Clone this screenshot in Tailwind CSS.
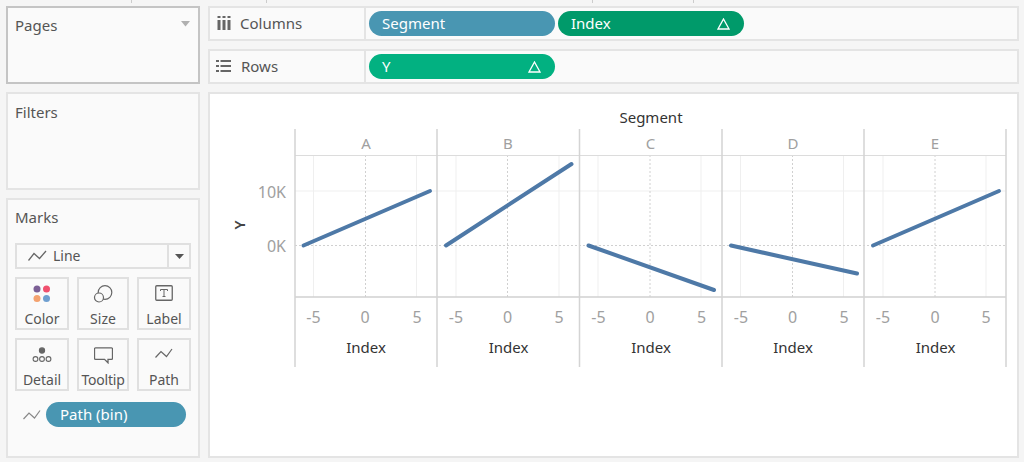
<!DOCTYPE html>
<html lang="en">
<head>
    <meta charset="UTF-8">
    <title>Segment worksheet</title>
    <script src="https://cdn.jsdelivr.net/npm/@tailwindcss/browser@4"></script>
</head>
<body class="bg-[#f5f5f5] font-['Noto_Sans',sans-serif] text-[#555] overflow-hidden">
    <div class="relative w-[1024px] h-[462px] flex gap-[8px] pl-[6px] pr-[5px] pt-[6px] pb-[4px]">
        <!-- top ruler ticks -->
        <div class="absolute left-[131px] top-0 w-px h-[3px] bg-[#ccc]"></div>
        <div class="absolute left-[266px] top-0 w-px h-[3px] bg-[#ccc]"></div>
        <div class="absolute left-[592px] top-0 w-px h-[3px] bg-[#ccc]"></div>
        <div class="absolute left-[693px] top-0 w-px h-[3px] bg-[#ccc]"></div>

        <!-- Left cards -->
        <div class="w-[194px] shrink-0 flex flex-col gap-[8px]">
            <div class="h-[78px] bg-[#fafafa] border-2 border-[#c4c4c4] px-[7px] pt-[7px] flex justify-between items-start">
                <span class="text-[15px] leading-[20px]">Pages</span>
                <svg class="mt-[6px] mr-[1px]" width="9" height="6" viewBox="0 0 9 6"><path d="M0 0h9L4.500 5.500z" fill="#b0b0b0"/></svg>
            </div>
            <div class="h-[98px] bg-[#fafafa] border-2 border-[#e4e4e4] px-[7px] pt-[8px]">
                <span class="text-[15px] leading-[20px] block">Filters</span>
            </div>
            <div class="flex-1 bg-[#fafafa] border-2 border-[#e4e4e4] px-[7px] pt-[7px]">
                <div class="text-[15px] leading-[20px]">Marks</div>
                <div class="mt-[16px] h-[26px] w-[176px] border-2 border-[#e0e0e0] flex items-center">
                    <div class="flex-1 flex items-center pl-[11px] gap-[6px]">
                        <svg width="19" height="12" viewBox="0 0 19 12" fill="none" stroke="#666" stroke-width="1.300"><path d="M0.500 10.500 6 3.500l5.500 5L18 1"/></svg>
                        <span class="text-[14px] leading-[18px]">Line</span>
                    </div>
                    <div class="w-[22px] h-full border-l-2 border-[#e0e0e0] flex items-center justify-center">
                        <svg width="9" height="5" viewBox="0 0 9 5"><path d="M0 0h9L4.500 5z" fill="#555"/></svg>
                    </div>
                </div>
                <div class="mt-[8px] w-[176px] grid grid-cols-[54px_52px_54px] grid-rows-[53px_53px] gap-x-[8px] gap-y-[8px]">
                    <div class="border-2 border-[#e0e0e0] flex flex-col items-center pt-[6px]">
                        <svg width="18" height="18" viewBox="0 0 18 18"><circle cx="4" cy="4" r="3.500" fill="#7b5f95"/><circle cx="13.500" cy="4" r="3.500" fill="#f0506e"/><circle cx="4" cy="13.500" r="3.500" fill="#f4a26f"/><circle cx="13.500" cy="13.500" r="3.500" fill="#6f9fd0"/></svg>
                        <span class="text-[14px] leading-[18px] mt-[7px]">Color</span>
                    </div>
                    <div class="border-2 border-[#e0e0e0] flex flex-col items-center pt-[6px]">
                        <svg width="20" height="18" viewBox="0 0 20 18" fill="none" stroke="#666" stroke-width="1.200"><circle cx="12" cy="7.500" r="6.800"/><circle cx="6" cy="12.500" r="4.500" fill="#fafafa"/></svg>
                        <span class="text-[14px] leading-[18px] mt-[7px]">Size</span>
                    </div>
                    <div class="border-2 border-[#e0e0e0] flex flex-col items-center pt-[6px]">
                        <svg width="18" height="16" viewBox="0 0 18 16" fill="none"><rect x="0.750" y="0.750" width="16.500" height="14.500" rx="1" stroke="#666" stroke-width="1.300"/><path d="M5.500 4.500h7M5.500 4.500v1.500M12.500 4.500v1.500M9 4.500v7M7.500 11.500h3" stroke="#666"/></svg>
                        <span class="text-[14px] leading-[18px] mt-[9px]">Label</span>
                    </div>
                    <div class="border-2 border-[#e0e0e0] flex flex-col items-center pt-[7px]">
                        <svg width="20" height="16" viewBox="0 0 20 16" fill="none" stroke="#666" stroke-width="1.100"><circle cx="10" cy="3.500" r="2.600" fill="#666"/><circle cx="3.500" cy="12" r="2.400"/><circle cx="10" cy="12" r="2.400"/><circle cx="16.500" cy="12" r="2.400"/></svg>
                        <span class="text-[14px] leading-[18px] mt-[8px]">Detail</span>
                    </div>
                    <div class="border-2 border-[#e0e0e0] flex flex-col items-center pt-[7px]">
                        <svg width="19" height="17" viewBox="0 0 19 17" fill="none" stroke="#666" stroke-width="1.300"><path d="M1.500 0.800h16a1 1 0 0 1 1 1v9.500a1 1 0 0 1-1 1h-3.500v3.500l-3.500-3.500h-9a1 1 0 0 1-1-1V1.800a1 1 0 0 1 1-1z"/></svg>
                        <span class="text-[14px] leading-[18px] mt-[7px] tracking-[-0.2px]">Tooltip</span>
                    </div>
                    <div class="border-2 border-[#e0e0e0] flex flex-col items-center pt-[8px]">
                        <svg width="18" height="12" viewBox="0 0 18 12" fill="none" stroke="#666" stroke-width="1.200"><path d="M0.500 9.500 6 3.500l5.500 5L17 1"/></svg>
                        <span class="text-[14px] leading-[18px] mt-[11px]">Path</span>
                    </div>
                </div>
                <div class="mt-[11px] flex items-center gap-[5px] pl-[8px]">
                    <svg width="18" height="12" viewBox="0 0 18 12" fill="none" stroke="#888" stroke-width="1.200"><path d="M0.500 10 6 4l5.500 5L17 1.500"/></svg>
                    <div class="w-[140px] h-[25px] rounded-full bg-[#4996b2] text-white text-[15px] pl-[14px] flex items-center">Path (bin)</div>
                </div>
            </div>
        </div>

        <!-- Right side -->
        <div class="flex-1 flex flex-col gap-[8px]">
            <div class="h-[35px] bg-[#fafafa] border-2 border-[#e4e4e4] flex items-center">
                <div class="w-[156px] h-full border-r-2 border-[#e4e4e4] flex items-center pl-[7px] gap-[9px] pb-[1px]">
                    <svg width="14" height="14" viewBox="0 0 14 14" fill="#666"><path d="M0.500 4h3v10h-3zM5.500 4h3v10h-3zM10.500 4h3v10h-3zM0.500 0h3v2h-3zM5.500 0h3v2h-3zM10.500 0h3v2h-3z"/></svg>
                    <span class="text-[15px] leading-[20px]">Columns</span>
                </div>
                <div class="flex gap-[3px] pl-[3px]">
                    <div class="w-[186px] h-[25px] rounded-full bg-[#4996b2] text-white text-[15px] pl-[13px] flex items-center">Segment</div>
                    <div class="w-[186px] h-[25px] rounded-full bg-[#009a6a] text-white text-[15px] pl-[13px] pr-[14px] flex justify-between items-center">
                        <span>Index</span>
                        <svg width="13" height="12" viewBox="0 0 13 12" fill="none" stroke="#fff" stroke-width="1.300"><path d="M6.500 1 12 11H1z"/></svg>
                    </div>
                </div>
            </div>
            <div class="h-[35px] bg-[#fafafa] border-2 border-[#e4e4e4] flex items-center">
                <div class="w-[156px] h-full border-r-2 border-[#e4e4e4] flex items-center pl-[6px] gap-[10px] pb-[1px]">
                    <svg width="15" height="12" viewBox="0 0 15 12" fill="#666"><path d="M0 0h3v2H0zM4.500 0H15v2H4.500zM0 5h3v2H0zM4.500 5H15v2H4.500zM0 10h3v2H0zM4.500 10H15v2H4.500z"/></svg>
                    <span class="text-[15px] leading-[20px]">Rows</span>
                </div>
                <div class="pl-[3px]">
                    <div class="w-[186px] h-[25px] rounded-full bg-[#02b181] text-white text-[15px] pl-[13px] pr-[14px] flex justify-between items-center">
                        <span>Y</span>
                        <svg width="13" height="12" viewBox="0 0 13 12" fill="none" stroke="#fff" stroke-width="1.300"><path d="M6.500 1 12 11H1z"/></svg>
                    </div>
                </div>
            </div>

            <!-- View -->
            <div class="flex-1 bg-white border-2 border-[#e4e4e4]">
                <svg class="block" width="807" height="362" viewBox="210 94 807 362" font-family="Noto Sans, sans-serif">
                    <!-- gridlines -->
                    <g stroke="#efefef" stroke-width="1">
                        <path d="M295 191H1006"/>
                        <path d="M313.500 155V297M416.500 155V297M456 155V297M559 155V297M598 155V297M701 155V297M740.500 155V297M843.500 155V297M883 155V297M986 155V297"/>
                    </g>
                    <g stroke="#d0d0d0" stroke-width="1" stroke-dasharray="2 2">
                        <path d="M295 245.500H1006"/>
                        <path d="M365.500 155V297M507.500 155V297M650 155V297M792.500 155V297M935 155V297"/>
                    </g>
                    <!-- frame -->
                    <g stroke="#dcdcdc" stroke-width="1">
                        <path d="M295 155.500H1006"/>
                    </g>
                    <path d="M295 297H1006" stroke="#d0d0d0" stroke-width="1.500"/>
                    <g stroke="#d4d4d4" stroke-width="1.500">
                        <path d="M295 129V367M437 129V367M579.500 129V367M722 129V367M864 129V367M1006 129V367"/>
                    </g>
                    <!-- lines -->
                    <g stroke="#4e79a7" stroke-width="4" stroke-linecap="round" fill="none">
                        <path d="M303.500 245.500 430 191"/>
                        <path d="M446 245.500 571.500 164"/>
                        <path d="M588.500 245.500 714 290"/>
                        <path d="M731 245.500 857 273.500"/>
                        <path d="M873 245.500 999 191"/>
                    </g>
                    <text x="651" y="123" font-size="15" fill="#333" text-anchor="middle">Segment</text>
                    <g font-size="15" fill="#a0a0a0" text-anchor="middle">
                        <text x="366" y="149">A</text>
                        <text x="508" y="149">B</text>
                        <text x="650.500" y="149">C</text>
                        <text x="793" y="149">D</text>
                        <text x="935" y="149">E</text>
                    </g>
                    <g font-size="16" fill="#a0a0a0" text-anchor="end">
                        <text x="286" y="198">10K</text>
                        <text x="286" y="252">0K</text>
                    </g>
                    <text transform="translate(245 225) rotate(-90)" font-size="15" font-weight="600" fill="#444" text-anchor="middle">Y</text>
                    <g font-size="16" fill="#a0a0a0" text-anchor="middle">
                        <text x="313.500" y="323">-5</text><text x="365" y="323">0</text><text x="417" y="323">5</text>
                        <text x="456" y="323">-5</text><text x="507.500" y="323">0</text><text x="559" y="323">5</text>
                        <text x="598.500" y="323">-5</text><text x="650" y="323">0</text><text x="701.500" y="323">5</text>
                        <text x="741" y="323">-5</text><text x="792.500" y="323">0</text><text x="844" y="323">5</text>
                        <text x="883" y="323">-5</text><text x="935" y="323">0</text><text x="986" y="323">5</text>
                    </g>
                    <g font-size="15" fill="#333" text-anchor="middle">
                        <text x="366" y="353">Index</text>
                        <text x="508.500" y="353">Index</text>
                        <text x="651" y="353">Index</text>
                        <text x="793" y="353">Index</text>
                        <text x="935.500" y="353">Index</text>
                    </g>
                </svg>
            </div>
        </div>
    </div>
</body>
</html>
